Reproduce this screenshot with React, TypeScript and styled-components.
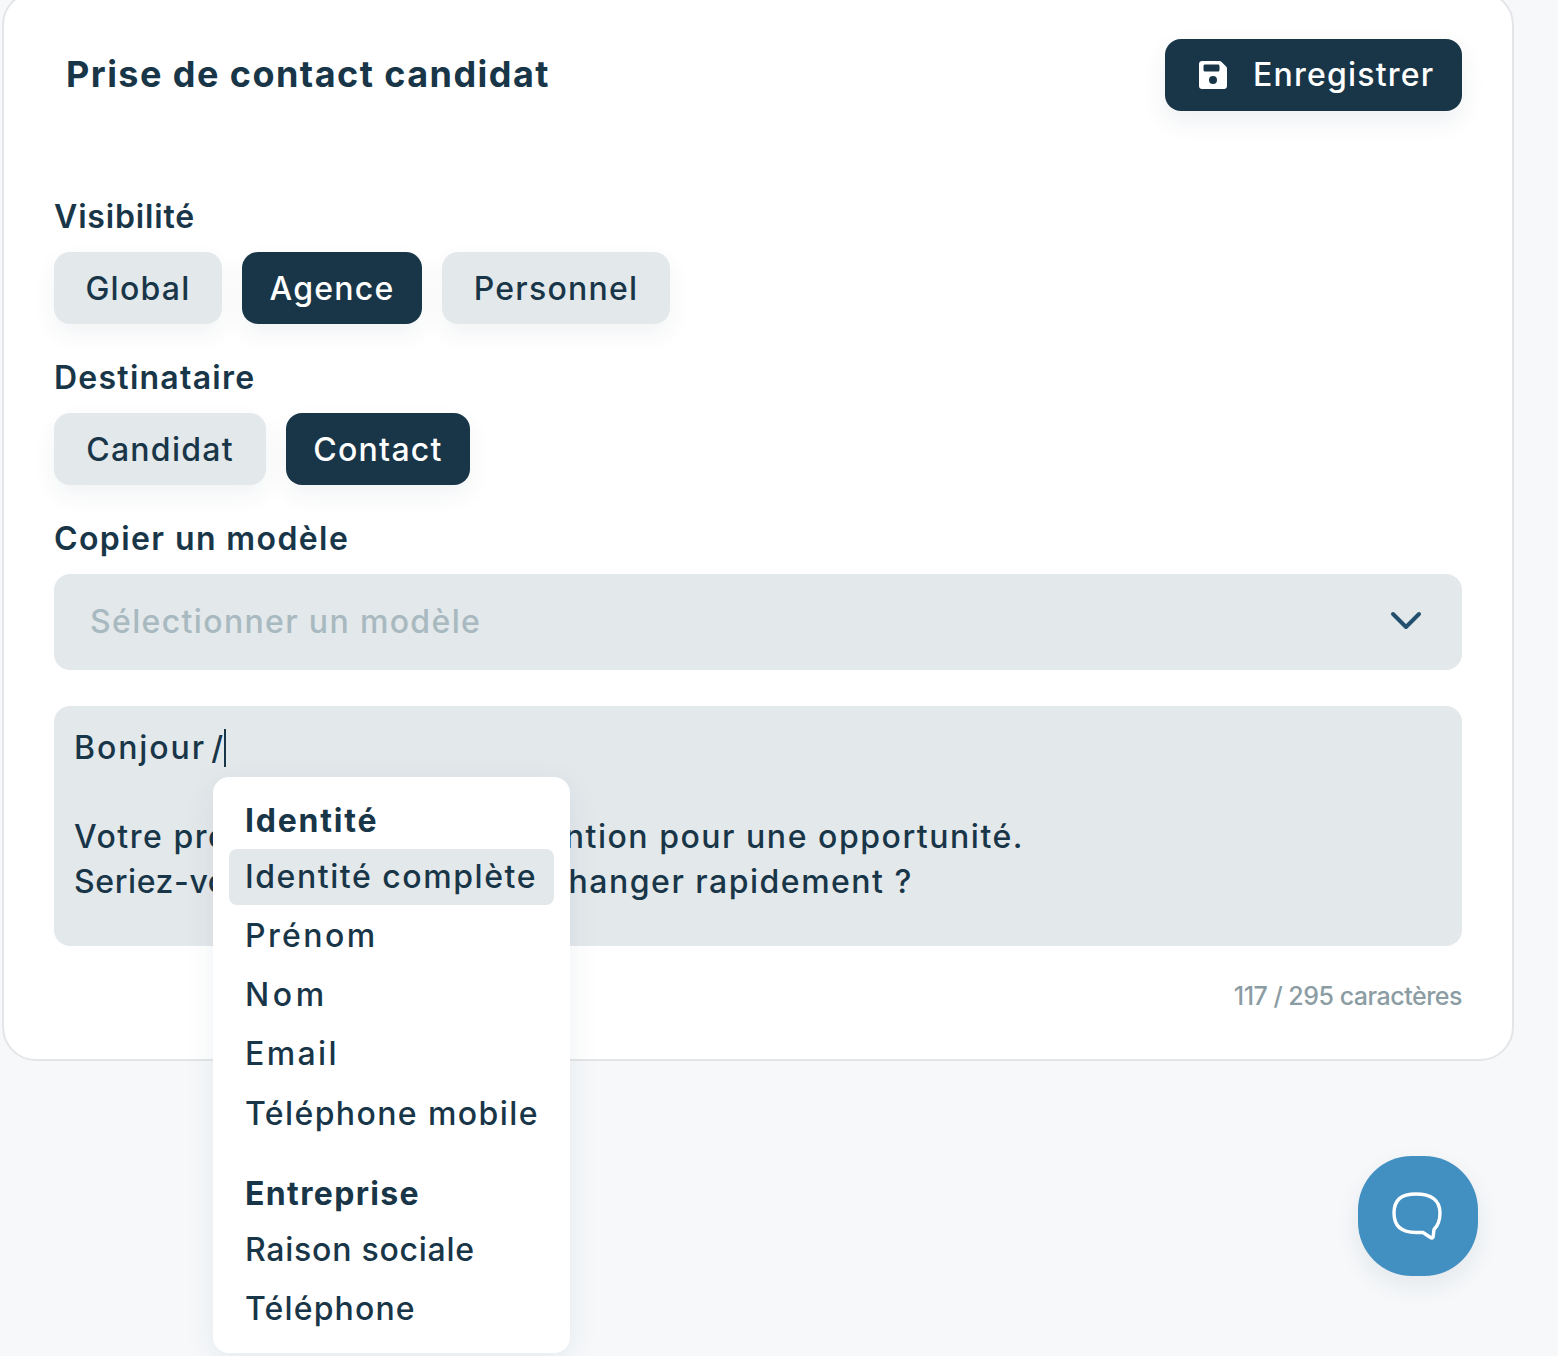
import React from 'react';
import styled, { createGlobalStyle } from 'styled-components';

const GlobalStyle = createGlobalStyle`
  html, body {
    margin: 0;
    height: 1356px;
    overflow: hidden;
    background: #f6f8fa;
    font-family: Inter, "Noto Sans", sans-serif;
    color: #193648;
  }
  * { box-sizing: border-box; }
`;

const Card = styled.section`
  width: 1512px;
  margin: -9px 0 0 2px;
  padding: 46px 50px 47px 50px;
  background: #fff;
  border: 2px solid #e3e5e8;
  border-radius: 34px;
  display: flex;
  flex-direction: column;
`;

const Header = styled.header`
  display: flex;
  align-items: center;
  justify-content: space-between;
  height: 72px;
  margin-bottom: 87px;
`;

const Title = styled.h1`
  margin: 0 0 2px 12px;
  font-size: 36px;
  font-weight: 700;
  letter-spacing: 1.45px;
  line-height: 70px;
`;

const SaveButton = styled.button`
  width: 297px;
  height: 72px;
  padding: 0 0 0 34px;
  display: flex;
  align-items: center;
  gap: 26px;
  border: 0;
  border-radius: 16px;
  background: #193648;
  color: #fff;
  font: 500 32px/1 Inter, sans-serif;
  letter-spacing: 1.2px;
  box-shadow: 0 10px 24px rgba(25, 54, 72, 0.08);
`;

const Label = styled.div<{ $ls: number }>`
  height: 36px;
  margin-bottom: 18px;
  font-size: 32px;
  font-weight: 600;
  line-height: 38px;
  letter-spacing: ${(p) => p.$ls}px;
`;

const ChipRow = styled.div`
  display: flex;
  gap: 20px;
  margin-bottom: 35px;
`;

const Chip = styled.div<{ $active?: boolean; $w: number }>`
  width: ${(p) => p.$w}px;
  height: 72px;
  display: flex;
  align-items: center;
  justify-content: center;
  border-radius: 16px;
  background: ${(p) => (p.$active ? '#193648' : '#e3e8eb')};
  color: ${(p) => (p.$active ? '#fff' : '#193648')};
  font-size: 32px;
  font-weight: 500;
  letter-spacing: 1.25px;
  box-shadow: 0 10px 24px rgba(25, 54, 72, 0.06);
`;

const Select = styled.div`
  height: 96px;
  padding: 0 40px 2px 36px;
  margin-bottom: 36px;
  display: flex;
  align-items: center;
  justify-content: space-between;
  border-radius: 16px;
  background: #e3e8eb;
  color: #a8b9c0;
  font-size: 32px;
  font-weight: 500;
  letter-spacing: 1.35px;
`;

const EditorBox = styled.div`
  position: relative;
  height: 240px;
  padding: 20px;
  border-radius: 16px;
  background: #e3e8eb;
  font-size: 32px;
  font-weight: 500;
  line-height: 44.6px;
`;

const Line = styled.div<{ $ls: number }>`
  white-space: pre;
  min-height: 44.6px;
  letter-spacing: ${(p) => p.$ls}px;
`;

const FirstLine = styled(Line)`
  word-spacing: -5px;
`;

const Tight = styled.span`
  letter-spacing: 0.6px;
`;

const Caret = styled.span`
  display: inline-block;
  width: 2px;
  height: 38px;
  margin-left: -1px;
  vertical-align: -8px;
  background: #193648;
`;

const Menu = styled.div`
  position: absolute;
  top: 71px;
  left: 159px;
  width: 357px;
  padding: 16px;
  display: flex;
  flex-direction: column;
  gap: 24px;
  border-radius: 16px;
  background: #fff;
  box-shadow: 0 8px 32px rgba(25, 54, 72, 0.07);
`;

const MenuGroup = styled.div`
  display: flex;
  flex-direction: column;
  gap: 3.25px;
`;

const GroupTitle = styled.div<{ $ls: number }>`
  height: 56px;
  margin-bottom: -3.25px;
  padding-left: 16px;
  display: flex;
  align-items: center;
  font-weight: 700;
  letter-spacing: ${(p) => p.$ls}px;
`;

const MenuItem = styled.div<{ $active?: boolean; $ls: number }>`
  height: 56px;
  padding-left: 16px;
  display: flex;
  align-items: center;
  border-radius: 8px;
  background: ${(p) => (p.$active ? '#e3e8eb' : 'transparent')};
  letter-spacing: ${(p) => p.$ls}px;
  white-space: nowrap;
`;

const Counter = styled.div`
  margin-top: 34px;
  font-size: 25px;
  font-weight: 500;
  line-height: 32px;
  text-align: right;
  color: #8b9ca3;
  letter-spacing: -0.5px;
`;

const ChatButton = styled.button`
  position: fixed;
  right: 80px;
  bottom: 80px;
  width: 120px;
  height: 120px;
  padding: 0 2px 0 0;
  display: flex;
  align-items: center;
  justify-content: center;
  border: 0;
  border-radius: 54px;
  background: #428fc1;
  box-shadow: 0 10px 24px rgba(25, 54, 72, 0.08);
`;

const SaveIcon = () => (
  <svg width="28" height="28" viewBox="0 0 28 28" aria-hidden="true">
    <path
      fill="#fff"
      fillRule="evenodd"
      d="M3 0H20.5C21.3 0 22 .3 22.6 .9L27.1 5.4C27.7 6 28 6.7 28 7.5V25C28 26.7 26.7 28 25 28H3C1.3 28 0 26.7 0 25V3C0 1.3 1.3 0 3 0ZM6 3.5C5.2 3.5 4.5 4.2 4.5 5V9C4.5 9.8 5.2 10.5 6 10.5H19C19.8 10.5 20.5 9.8 20.5 9V5C20.5 4.2 19.8 3.5 19 3.5ZM14 15A4 4 0 1 0 14 23A4 4 0 1 0 14 15Z"
    />
  </svg>
);

const Chevron = () => (
  <svg width="32" height="20" viewBox="0 0 32 20" fill="none" aria-hidden="true">
    <path d="M3 3L16 16L29 3" stroke="#23506e" strokeWidth="4" strokeLinecap="round" strokeLinejoin="round" />
  </svg>
);

const ChatIcon = () => (
  <svg width="50" height="48" viewBox="0 0 50 48" fill="none" aria-hidden="true">
    <path
      d="M24 2C9 2 2 8 2 21C2 34 9 40.5 24 40.5H31L38.5 45.5C40 46.5 41 46 41.2 44.5L42 37.5C46 33.5 48 28 48 21C48 8 39 2 24 2Z"
      stroke="#fff"
      strokeWidth="3.4"
      strokeLinejoin="round"
    />
  </svg>
);

export default function App() {
  return (
    <>
      <GlobalStyle />
      <Card>
        <Header>
          <Title>Prise de contact candidat</Title>
          <SaveButton>
            <SaveIcon />
            Enregistrer
          </SaveButton>
        </Header>

        <Label $ls={0.85}>Visibilité</Label>
        <ChipRow>
          <Chip $w={168}>Global</Chip>
          <Chip $w={180} $active>Agence</Chip>
          <Chip $w={228}>Personnel</Chip>
        </ChipRow>

        <Label $ls={1.25}>Destinataire</Label>
        <ChipRow>
          <Chip $w={212}>Candidat</Chip>
          <Chip $w={184} $active>Contact</Chip>
        </ChipRow>

        <Label $ls={1.4}>Copier un modèle</Label>
        <Select>
          Sélectionner un modèle
          <Chevron />
        </Select>

        <EditorBox>
          <FirstLine $ls={1.9}>Bonjour /<Caret /></FirstLine>
          <Line $ls={1}> </Line>
          <Line $ls={1.53}>Votre profil a retenu mon attention pour une opportunité.</Line>
          <Line $ls={1.5}><Tight>Seriez-vous disponible pour éc</Tight>hanger rapidement ?</Line>
          <Menu>
            <MenuGroup>
              <GroupTitle $ls={1.8}>Identité</GroupTitle>
              <MenuItem $active $ls={1.55}>Identité complète</MenuItem>
              <MenuItem $ls={2.4}>Prénom</MenuItem>
              <MenuItem $ls={3.6}>Nom</MenuItem>
              <MenuItem $ls={2.4}>Email</MenuItem>
              <MenuItem $ls={1.4}>Téléphone mobile</MenuItem>
            </MenuGroup>
            <MenuGroup>
              <GroupTitle $ls={1.35}>Entreprise</GroupTitle>
              <MenuItem $ls={0.75}>Raison sociale</MenuItem>
              <MenuItem $ls={1.15}>Téléphone</MenuItem>
            </MenuGroup>
          </Menu>
        </EditorBox>

        <Counter>117 / 295 caractères</Counter>
      </Card>
      <ChatButton aria-label="Chat">
        <ChatIcon />
      </ChatButton>
    </>
  );
}
